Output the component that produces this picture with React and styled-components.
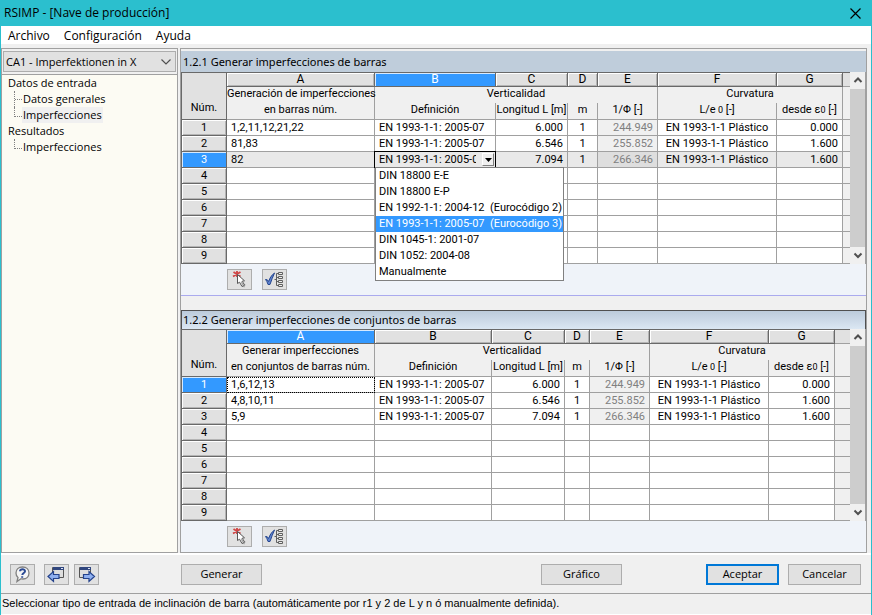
import React, { useState } from 'react'
import styled, { createGlobalStyle, css } from 'styled-components'

const GlobalStyle = createGlobalStyle`
  * {
    box-sizing: border-box;
  }

  body {
    margin: 0;
    color: #000;
    font-family: 'Open Sans', 'Noto Sans', sans-serif;
    font-size: 11px;
    line-height: 16px;
  }

  button, select {
    margin: 0;
    padding: 0;
    font: inherit;
    color: inherit;
  }
`

const Window = styled.div`
  display: flex;
  flex-direction: column;
  min-height: 100vh;
  background-color: #f0f0f0;
  border: 1px solid #2bbfce;
  border-top: 0;
`

const TitleBar = styled.header`
  display: flex;
  align-items: center;
  justify-content: space-between;
  height: 26px;
  padding: 0 9px 0 3px;
  background-color: #2bbfce;
`

const Title = styled.h1`
  margin: 0;
  font-size: 12px;
  font-weight: normal;
`

const CloseButton = styled.button`
  display: flex;
  border: 0;
  background: none;
`

const MenuBar = styled.nav`
  display: flex;
  gap: 14px;
  height: 18px;
  padding: 0 7px;
  background-color: #fff;
`

const MenuItem = styled.button`
  border: 0;
  background: none;
  font-size: 12px;
  line-height: 20px;
`

const Main = styled.main`
  display: flex;
  flex: 1;
  gap: 2px;
  margin-top: 4px;
  padding-right: 4px;
  border-bottom: 2px solid #fff;
`

const Sidebar = styled.aside`
  display: flex;
  flex-direction: column;
  width: 177px;
  border: 1px solid #a0a0a0;
  background-color: #fcfbf3;
`

const CaseBox = styled.div`
  padding: 2px 1px;
  background-color: #f0f0f0;
  border-bottom: 1px solid #a0a0a0;
`

const CaseSelect = styled.div`
  display: flex;
  align-items: center;
  height: 21px;
  padding-right: 4px;
  border: 1px solid #adadad;
  background-color: #e1e1e1;

  select {
    flex: 1;
    padding-left: 2px;
    appearance: none;
    border: 0;
    background: none;
  }
`

const Tree = styled.ul`
  margin: 0;
  padding: 0 0 0 6px;
  list-style: none;

  ul {
    margin: 0;
    padding: 0 0 0 6px;
    list-style: none;
  }
`

const TreeLeaf = styled.li`
  display: grid;
  grid-template-columns: 8px auto;
  justify-content: start;
  height: 16px;

  &::before {
    content: '';
    height: 9px;
    border-left: 1px dotted #808080;
    border-bottom: 1px dotted #808080;
  }

  &:not(:last-child)::before {
    height: 16px;
    border-bottom: 0;
    background: repeating-linear-gradient(90deg, #808080 0 1px, transparent 1px 2px) 0 8px / 8px 1px no-repeat;
  }
`

const TreeLink = styled.a`
  padding: 0 1px;
  color: inherit;
  text-decoration: none;
  background-color: ${({ $current }) => $current ? '#f0f0f0' : 'transparent'};
`

const Content = styled.div`
  display: flex;
  flex: 1;
  flex-direction: column;
  min-width: 0;
  padding-top: 2px;
  border: 1px solid #a0a0a0;
`

const Section = styled.section`
  background-color: #eff3f9;

  & + & {
    flex: 1;
    margin-top: 14px;
  }

  &:first-child {
    border-bottom: 1px solid #aaaaee;
  }
`

const SectionTitle = styled.h2`
  height: ${({ $active }) => $active ? 19 : 21}px;
  margin: 0;
  padding-left: 2px;
  font-family: 'Noto Sans', 'Open Sans', sans-serif;
  font-size: 11px;
  font-weight: normal;
  line-height: ${({ $active }) => $active ? 17 : 21}px;
  background-color: #bfcddb;

  ${({ $active }) => $active && css`
    padding-left: 1px;
    border: 1px solid #505050;
    border-bottom: 0;
    background: linear-gradient(#bccbdb, #dbe7f3);
  `}
`

const GridArea = styled.div`
  display: flex;
`

const Table = styled.table`
  flex: 1;
  width: 100%;
  min-width: 0;
  table-layout: fixed;
  border-collapse: separate;
  border-spacing: 0;
  border-left: 1px solid #696969;
  border-top: 1px solid #696969;
  font-family: Roboto, 'Liberation Sans', sans-serif;
  line-height: 15px;
  white-space: nowrap;

  th, td {
    padding: 0;
    font-weight: normal;
  }
`

const Col = styled.col`
  width: ${({ $width }) => $width ? `${$width}px` : 'auto'};
`

const raised = css`
  background-color: #e1e1e1;
  border-right: 1px solid #696969;
  border-bottom: 1px solid #696969;
  box-shadow: inset 1px 1px #fff, inset -1px -1px #b4b4b4;
`

const selected = css`
  color: #fff;
  background-color: #3399ff;
  box-shadow: inset 1px 1px #d6eaff;
`

const Letter = styled.th`
  ${raised}
  height: 14px;
  font-size: 12px;
  line-height: 13px;
  ${({ $selected }) => $selected && selected}
`

const Corner = styled.th`
  height: 47px;
  vertical-align: bottom;
  background-color: #e1e1e1;
  border-right: 1px solid #696969;
  border-bottom: 1px solid #696969;

  && {
    padding-bottom: 4px;
  }
`

const Group = styled.th`
  height: 16px;
  line-height: 14px;
  vertical-align: top;
  background-color: #f0f0f0;
  border-right: 1px solid #a0a0a0;
`

const Heading = styled.th`
  height: 17px;
  line-height: 14px;
  vertical-align: top;
  background-color: #f0f0f0;
  border-right: 1px solid #a0a0a0;
  border-bottom: 1px solid #a0a0a0;
`

const Sub = styled.span`
  font-size: 9px;
  line-height: 0;
`

const RowNumber = styled.th`
  ${raised}
  height: 16px;
  ${({ $selected }) => $selected && selected}
`

const Cell = styled.td`
  position: relative;
  height: 16px;
  text-align: ${({ $align }) => $align ?? 'left'};
  color: ${({ $locked }) => $locked ? '#808080' : '#000'};
  background-color: ${({ $locked, $current }) => $locked ? ($current ? '#dedede' : '#f0f0f0') : ($current ? '#e9e9e9' : '#fff')};
  border-right: 1px solid #a0a0a0;
  border-bottom: 1px solid #a0a0a0;
  outline: ${({ $focused }) => $focused ? '1px dotted #000' : 'none'};
  outline-offset: -1px;

  && {
    padding: 0 4px;
    ${({ $editing }) => $editing && 'padding: 0;'}
  }
`

const Filler = styled.td`
  background-color: ${({ $dark }) => $dark ? '#e1e1e1' : '#f0f0f0'};
  border-bottom: 1px solid ${({ $open }) => $open ? '#f0f0f0' : '#a0a0a0'};
`

const CellEditor = styled.div`
  display: flex;
  height: 15px;
  padding-right: 1px;
  outline: 1px solid #000;

  select {
    flex: 1;
    min-width: 0;
    height: 15px;
    padding: 0 6px 0 4px;
    appearance: none;
    border: 0;
    outline: 0;
    background: none;
    text-overflow: clip;
  }
`

const ArrowButton = styled.button`
  display: flex;
  align-items: center;
  justify-content: center;
  width: 12px;
  height: 13px;
  margin-top: 1px;
  border: 1px solid;
  border-color: #fff #808080 #808080 #fff;
  background-color: #f0f0f0;
`

const OptionList = styled.ul`
  position: absolute;
  z-index: 1;
  top: 15px;
  left: 0;
  margin: 0;
  padding: 0;
  list-style: none;
  border: 1px solid #808080;
  background-color: #fff;
`

const Option = styled.li`
  height: 16px;
  padding: 0 1px 0 3px;
  line-height: 16px;
  white-space: pre;
  color: ${({ $selected }) => $selected ? '#fff' : '#000'};
  background-color: ${({ $selected }) => $selected ? '#3399ff' : '#fff'};
`

const ScrollBar = styled.div`
  display: flex;
  flex-direction: column;
  width: 16px;
  border-right: 1px solid #a0a0a0;
  background-color: #f0f0f0;
`

const ScrollButton = styled.button`
  display: flex;
  align-items: center;
  justify-content: center;
  height: 17px;
  border: 0;
  background-color: #f0f0f0;
`

const ScrollThumb = styled.div`
  flex: 1;
  background-color: #cdcdcd;
`

const Tools = styled.div`
  display: flex;
  gap: 10px;
  padding: 5px 0 5px 46px;
`

const ToolButton = styled.button`
  display: flex;
  align-items: center;
  justify-content: center;
  width: 25px;
  height: 21px;
  border: 1px solid #adadad;
  background-color: #e1e1e1;
`

const Footer = styled.footer`
  display: flex;
  align-items: center;
  height: 38px;
  padding: 0 10px 0 9px;
`

const FooterTools = styled.div`
  display: flex;
  gap: 5px;
  width: 171px;

  ${ToolButton}:first-child {
    margin-right: 4px;
  }
`

const Button = styled.button`
  width: ${({ $wide }) => $wide ? 81 : 73}px;
  height: 21px;
  border: ${({ $primary }) => $primary ? '2px solid #0078d7' : '1px solid #adadad'};
  background-color: #e1e1e1;
`

const Actions = styled.div`
  display: flex;
  gap: 9px;
  margin-left: auto;

  ${Button}:first-child {
    margin-right: 75px;
  }
`

const StatusBar = styled.div`
  height: 22px;
  padding-left: 1px;
  border-top: 1px solid #a0a0a0;
  border-bottom: 1px solid #fff;
  font-family: 'Liberation Sans', Arial, sans-serif;
  line-height: 19px;
  white-space: nowrap;
`

const CloseIcon = () => <svg width="13" height="13" viewBox="0 0 13 13" stroke="#000" strokeWidth="1.2" fill="none">
  <path d="M1.5 1.5l10 10M11.5 1.5l-10 10" />
</svg>

const Chevron = ({ up, thin }) => <svg width="10" height="7" viewBox="0 0 10 7" fill="none" stroke="#505050" strokeWidth={thin ? 1.2 : 2}>
  <path d={up ? 'M1.5 5L5 1.5 8.5 5' : thin ? 'M.5 1.5L5 6 9.5 1.5' : 'M1.5 1.5L5 5 8.5 1.5'} />
</svg>

const PickIcon = () => <svg width="19" height="17" viewBox="0 0 19 17">
  <path d="M10.500 9l5 4.500-1 3-2.500-1z" fill="#8a8a8a" opacity=".6" />
  <path d="M3.500 1l7 4.500M3 5.500L10.500 1M7 0v6" stroke="#d04545" strokeWidth="1.800" fill="none" />
  <path d="M7.500 3.500v9l2-1.300 2.500 4.300 2.500-1.300-2.300-4 2.300-.4z" fill="#fff" stroke="#555" />
  <path d="M10.500 11l1.500-.8 2 3.600-1.500.9z" fill="#aaa" />
</svg>

const CheckTreeIcon = () => <svg width="19" height="17" viewBox="0 0 19 17" fill="none">
  <path d="M.5 8.500Q2.500 8 3.500 10.500 5.500 4.500 9.500 2 7 7.500 5 13.500H3Q2 10 .5 8.500z" fill="#5f83cf" stroke="#26468f" />
  <path d="M9.500 8.500h1.500M11.500 2.500v12M11.500 2.500h1.500M11.500 6.500h1.500M11.500 10.500h1.500M11.500 14.500h1.500" stroke="#606060" />
  <path d="M13.500 1.500h4v2h-4zM13.500 5.500h4v2h-4zM13.500 9.500h4v2h-4zM13.500 13.500h4v2h-4z" fill="#eee" stroke="#606060" />
</svg>

const HelpIcon = () => <svg width="19" height="19" viewBox="0 0 19 19" fill="none">
  <path d="M9.5 2c4 0 6.500 2.500 6.500 6s-2.500 6-6 6c-1 0-1.500 0-2-.3L4 16.500l1-4C3.500 11.500 3 10 3 8c0-3.500 2.500-6 6.500-6z" fill="#f5f5f5" stroke="#808080" strokeWidth="1.300" />
  <path d="M7 6.300C7.200 3.500 12 3.500 12 6.200 12 8 9.500 8 9.300 10M9.200 11.200v1.600" stroke="#2b4a94" strokeWidth="2" />
</svg>

const PageIcon = ({ next }) => <svg width="19" height="17" viewBox="0 0 19 17">
  <path d={next ? 'M2.500 1.500h11v10h-11z' : 'M5.500 1.500h11v10h-11z'} fill="#dedede" stroke="#555" />
  <path d={next ? 'M3 1h11v3H3z' : 'M6 1h11v3H6z'} fill="#31477f" />
  <path d={next ? 'M11 2h2v1h-2z' : 'M14 2h2v1h-2z'} fill="#dfe6f7" />
  <path d={next ? 'M17.500 10.500L12 5.500v3H6.500v4H12v3z' : 'M1 10.500L6.500 5.500v3H12v4H6.500v3z'} fill="#8fb0f0" stroke="#25438c" strokeWidth="1.200" />
</svg>

const definitions = [
  'DIN 18800 E-E',
  'DIN 18800 E-P',
  'EN 1992-1-1: 2004-12  (Eurocódigo 2)',
  'EN 1993-1-1: 2005-07  (Eurocódigo 3)',
  'DIN 1045-1: 2001-07',
  'DIN 1052: 2004-08',
  'Manualmente',
]

const letters = ['A', 'B', 'C', 'D', 'E', 'F', 'G']

const values = [
  ['6.000', '1', '244.949', 'EN 1993-1-1 Plástico', '0.000'],
  ['6.546', '1', '255.852', 'EN 1993-1-1 Plástico', '1.600'],
  ['7.094', '1', '266.346', 'EN 1993-1-1 Plástico', '1.600'],
]

const aligns = ['left', 'left', 'right', 'center', 'right', 'center', 'right']

const shortName = name => name.split('  ')[0]

const DefinitionEditor = () => {
  const [definition, setDefinition] = useState(definitions[3])
  const [open, setOpen] = useState(true)

  function choose (name) {
    setDefinition(name)
    setOpen(false)
  }

  return <>
    <CellEditor>
      <select
        aria-label="Definición"
        value={definition}
        onMouseDown={e => { e.preventDefault(); setOpen(!open) }}
        onChange={e => setDefinition(e.target.value)}>
        {definitions.map(name => <option key={name} value={name}>{shortName(name)}</option>)}
      </select>
      <ArrowButton type="button" aria-label="Abrir lista" onClick={() => setOpen(!open)}>
        <svg width="7" height="4" viewBox="0 0 7 4"><path d="M0 0h7L3.500 4z" /></svg>
      </ArrowButton>
    </CellEditor>
    {open && <OptionList role="listbox" aria-label="Definición">
      {definitions.map(name => <Option
        key={name}
        role="option"
        aria-selected={name === definition}
        $selected={name === definition}
        onClick={() => choose(name)}>{name}</Option>)}
    </OptionList>}
  </>
}

const ImperfectionGrid = ({ widths, heading, members, letter, row, editing }) => {
  return <GridArea>
    <Table>
      <colgroup>
        {widths.map((width, i) => <Col key={i} $width={width} />)}
        <Col />
      </colgroup>
      <thead>
        <tr>
          <Corner rowSpan={3}>Núm.</Corner>
          {letters.map(name => <Letter key={name} $selected={name === letter}>{name}</Letter>)}
          <Filler $dark />
        </tr>
        <tr>
          <Group>{heading[0]}</Group>
          <Group colSpan={4}>Verticalidad</Group>
          <Group colSpan={2}>Curvatura</Group>
          <Filler $open />
        </tr>
        <tr>
          <Heading>{heading[1]}</Heading>
          <Heading>Definición</Heading>
          <Heading>Longitud L [m]</Heading>
          <Heading>m</Heading>
          <Heading>1/Φ [-]</Heading>
          <Heading>L/e<Sub> 0</Sub> [-]</Heading>
          <Heading>desde ε<Sub>0</Sub> [-]</Heading>
          <Filler />
        </tr>
      </thead>
      <tbody>
        {Array.from({ length: 9 }, (_, i) => {
          const filled = i < values.length
          const cells = filled ? [members[i], 'EN 1993-1-1: 2005-07', ...values[i]] : letters.map(() => '')
          const current = editing && i === row
          return <tr key={i}>
            <RowNumber scope="row" $selected={i === row}>{i + 1}</RowNumber>
            {cells.map((text, j) => <Cell
              key={j}
              $align={aligns[j]}
              $locked={filled && j === 4}
              $current={current}
              $editing={current && j === 1}
              $focused={!editing && i === row && j === 0}>
              {current && j === 1 ? <DefinitionEditor /> : text}
            </Cell>)}
            <Filler />
          </tr>
        })}
      </tbody>
    </Table>
    <ScrollBar>
      <ScrollButton type="button" aria-label="Subir"><Chevron up /></ScrollButton>
      <ScrollThumb />
      <ScrollButton type="button" aria-label="Bajar"><Chevron /></ScrollButton>
    </ScrollBar>
  </GridArea>
}

const GridTools = () => <Tools>
  <ToolButton type="button" aria-label="Seleccionar barras"><PickIcon /></ToolButton>
  <ToolButton type="button" aria-label="Comprobar barras"><CheckTreeIcon /></ToolButton>
</Tools>

const App = () => {
  return <>
    <GlobalStyle />
    <Window>
      <TitleBar>
        <Title>RSIMP - [Nave de producción]</Title>
        <CloseButton type="button" aria-label="Cerrar"><CloseIcon /></CloseButton>
      </TitleBar>
      <MenuBar>
        <MenuItem type="button">Archivo</MenuItem>
        <MenuItem type="button">Configuración</MenuItem>
        <MenuItem type="button">Ayuda</MenuItem>
      </MenuBar>
      <Main>
        <Sidebar>
          <CaseBox>
            <CaseSelect>
              <select aria-label="Caso">
                <option>CA1 - Imperfektionen in X</option>
              </select>
              <Chevron thin />
            </CaseSelect>
          </CaseBox>
          <Tree>
            <li>
              Datos de entrada
              <ul>
                <TreeLeaf><TreeLink href="#generales">Datos generales</TreeLink></TreeLeaf>
                <TreeLeaf><TreeLink href="#imperfecciones" $current>Imperfecciones</TreeLink></TreeLeaf>
              </ul>
            </li>
            <li>
              Resultados
              <ul>
                <TreeLeaf><TreeLink href="#resultados">Imperfecciones</TreeLink></TreeLeaf>
              </ul>
            </li>
          </Tree>
        </Sidebar>
        <Content>
          <Section>
            <SectionTitle>1.2.1 Generar imperfecciones de barras</SectionTitle>
            <ImperfectionGrid
              widths={[45, 148, 121, 72, 30, 60, 119, 66]}
              heading={['Generación de imperfecciones', 'en barras núm.']}
              members={['1,2,11,12,21,22', '81,83', '82']}
              letter="B"
              row={2}
              editing />
            <GridTools />
          </Section>
          <Section>
            <SectionTitle $active>1.2.2 Generar imperfecciones de conjuntos de barras</SectionTitle>
            <ImperfectionGrid
              widths={[45, 148, 117, 73, 25, 60, 119, 66]}
              heading={['Generar imperfecciones', 'en conjuntos de barras núm.']}
              members={['1,6,12,13', '4,8,10,11', '5,9']}
              letter="A"
              row={0} />
            <GridTools />
          </Section>
        </Content>
      </Main>
      <Footer>
        <FooterTools>
          <ToolButton type="button" aria-label="Ayuda"><HelpIcon /></ToolButton>
          <ToolButton type="button" aria-label="Anterior"><PageIcon /></ToolButton>
          <ToolButton type="button" aria-label="Siguiente"><PageIcon next /></ToolButton>
        </FooterTools>
        <Button type="button" $wide>Generar</Button>
        <Actions>
          <Button type="button" $wide>Gráfico</Button>
          <Button type="button" $primary>Aceptar</Button>
          <Button type="button">Cancelar</Button>
        </Actions>
      </Footer>
      <StatusBar>Seleccionar tipo de entrada de inclinación de barra (automáticamente por r1 y 2 de L y n ó manualmente definida).</StatusBar>
    </Window>
  </>
}

export default App
